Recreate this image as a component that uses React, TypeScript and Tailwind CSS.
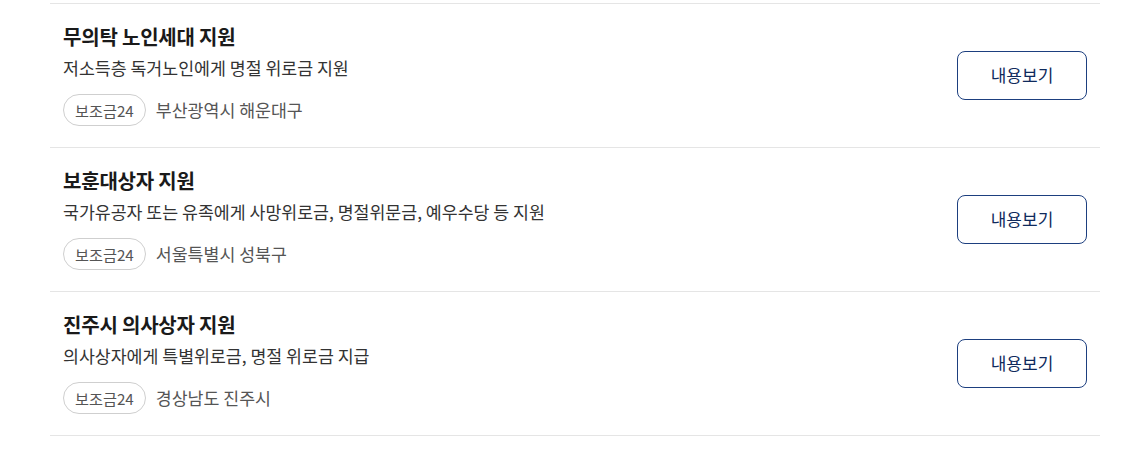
const items = [
  {
    title: "무의탁 노인세대 지원",
    desc: "저소득층 독거노인에게 명절 위로금 지원",
    region: "부산광역시 해운대구",
  },
  {
    title: "보훈대상자 지원",
    desc: "국가유공자 또는 유족에게 사망위로금, 명절위문금, 예우수당 등 지원",
    region: "서울특별시 성북구",
  },
  {
    title: "진주시 의사상자 지원",
    desc: "의사상자에게 특별위로금, 명절 위로금 지급",
    region: "경상남도 진주시",
  },
];

export default function App() {
  return (
    <div className="min-h-screen bg-white pt-[3px] font-['Noto_Sans_CJK_KR','Noto_Sans',sans-serif]">
      <ul className="ml-[50px] w-[1050px] border-t border-[#e5e5e5]">
        {items.map((item) => (
          <li
            key={item.title}
            className="flex items-center justify-between border-b border-[#e5e5e5] px-[13px] pt-5 pb-[21px]"
          >
            <div className="flex flex-col">
              <h3 className="text-[20px] leading-[26px] font-bold tracking-[-0.2px] text-[#1a1a1a]">
                {item.title}
              </h3>
              <p className="mt-[6px] text-[17.3px] leading-6 text-[#333]">{item.desc}</p>
              <div className="mt-[14px] flex items-center gap-[10px]">
                <span className="flex h-[32px] items-center rounded-full border border-[#cfcfcf] px-[11px] text-[15.2px] text-[#555]">
                  보조금24
                </span>
                <span className="text-[17.3px] text-[#555]">{item.region}</span>
              </div>
            </div>
            <button className="flex h-[49px] w-[130px] items-center justify-center rounded-lg border border-[#1d3f7f] bg-white text-[17px] text-[#0f2a5c]">
              내용보기
            </button>
          </li>
        ))}
      </ul>
    </div>
  );
}
